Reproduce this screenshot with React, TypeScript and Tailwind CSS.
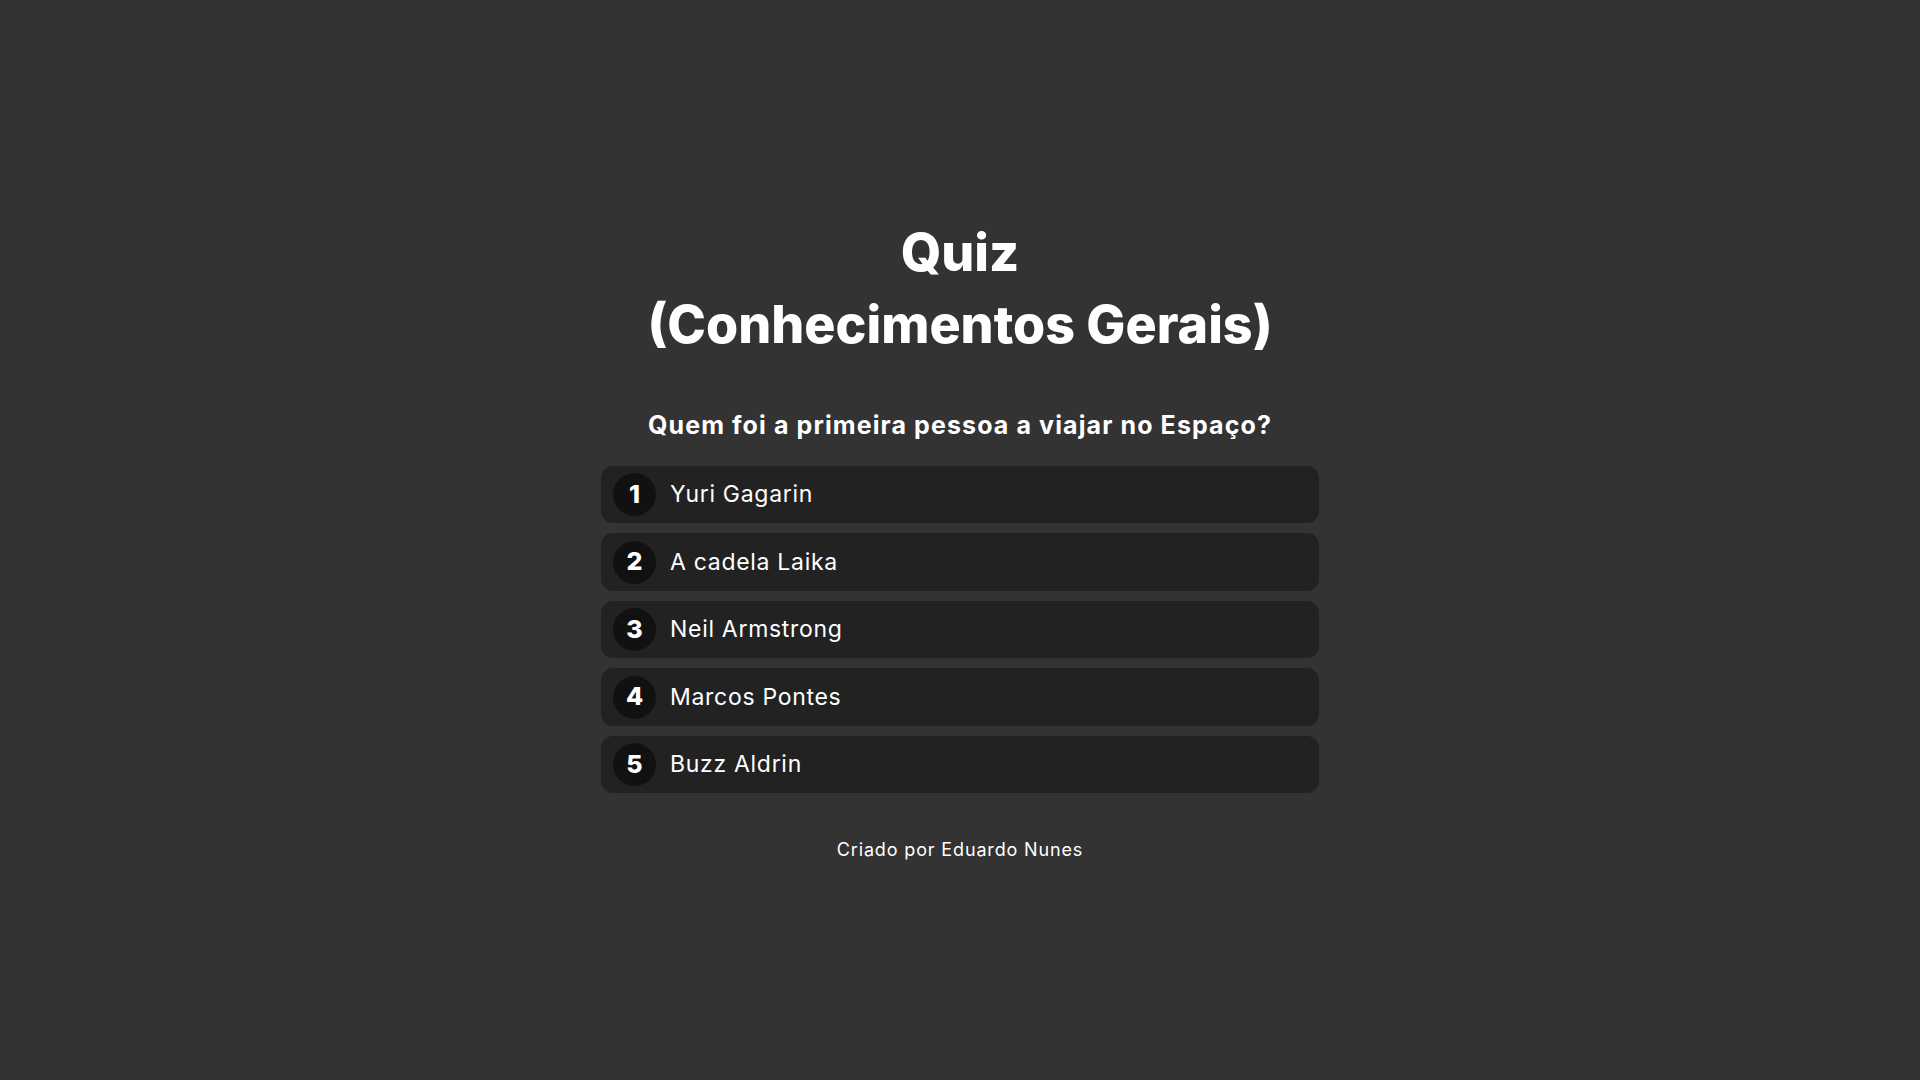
import React from "react";

const options = [
  "Yuri Gagarin",
  "A cadela Laika",
  "Neil Armstrong",
  "Marcos Pontes",
  "Buzz Aldrin",
];

export default function App() {
  return (
    <div
      className="min-h-screen w-full bg-[#333333] flex flex-col items-center justify-center text-white"
      style={{ fontFamily: "Inter, 'Open Sans', sans-serif" }}
    >
      <h1 className="text-[52px] leading-[72px] font-extrabold text-center tracking-[0px]">
        Quiz
        <br />
        (Conhecimentos Gerais)
      </h1>
      <p className="mt-[46px] text-[25px] leading-[36px] font-bold text-center tracking-[1.1px]">
        Quem foi a primeira pessoa a viajar no Espaço?
      </p>
      <div className="mt-[23px] w-[718px] flex flex-col gap-[10px]">
        {options.map((opt, i) => (
          <button
            key={opt}
            className="h-[57.5px] w-full bg-[#222222] rounded-[12px] flex items-center pl-[12px] gap-[14px] text-left"
          >
            <span className="w-[43px] h-[43px] rounded-full bg-[#111111] flex items-center justify-center text-[25px] font-extrabold">
              {i + 1}
            </span>
            <span className="text-[23px] font-normal tracking-[0.7px]">{opt}</span>
          </button>
        ))}
      </div>
      <p className="mt-[43px] text-[18px] leading-[27px] text-center tracking-[0.85px]">
        Criado por Eduardo Nunes
      </p>
    </div>
  );
}
